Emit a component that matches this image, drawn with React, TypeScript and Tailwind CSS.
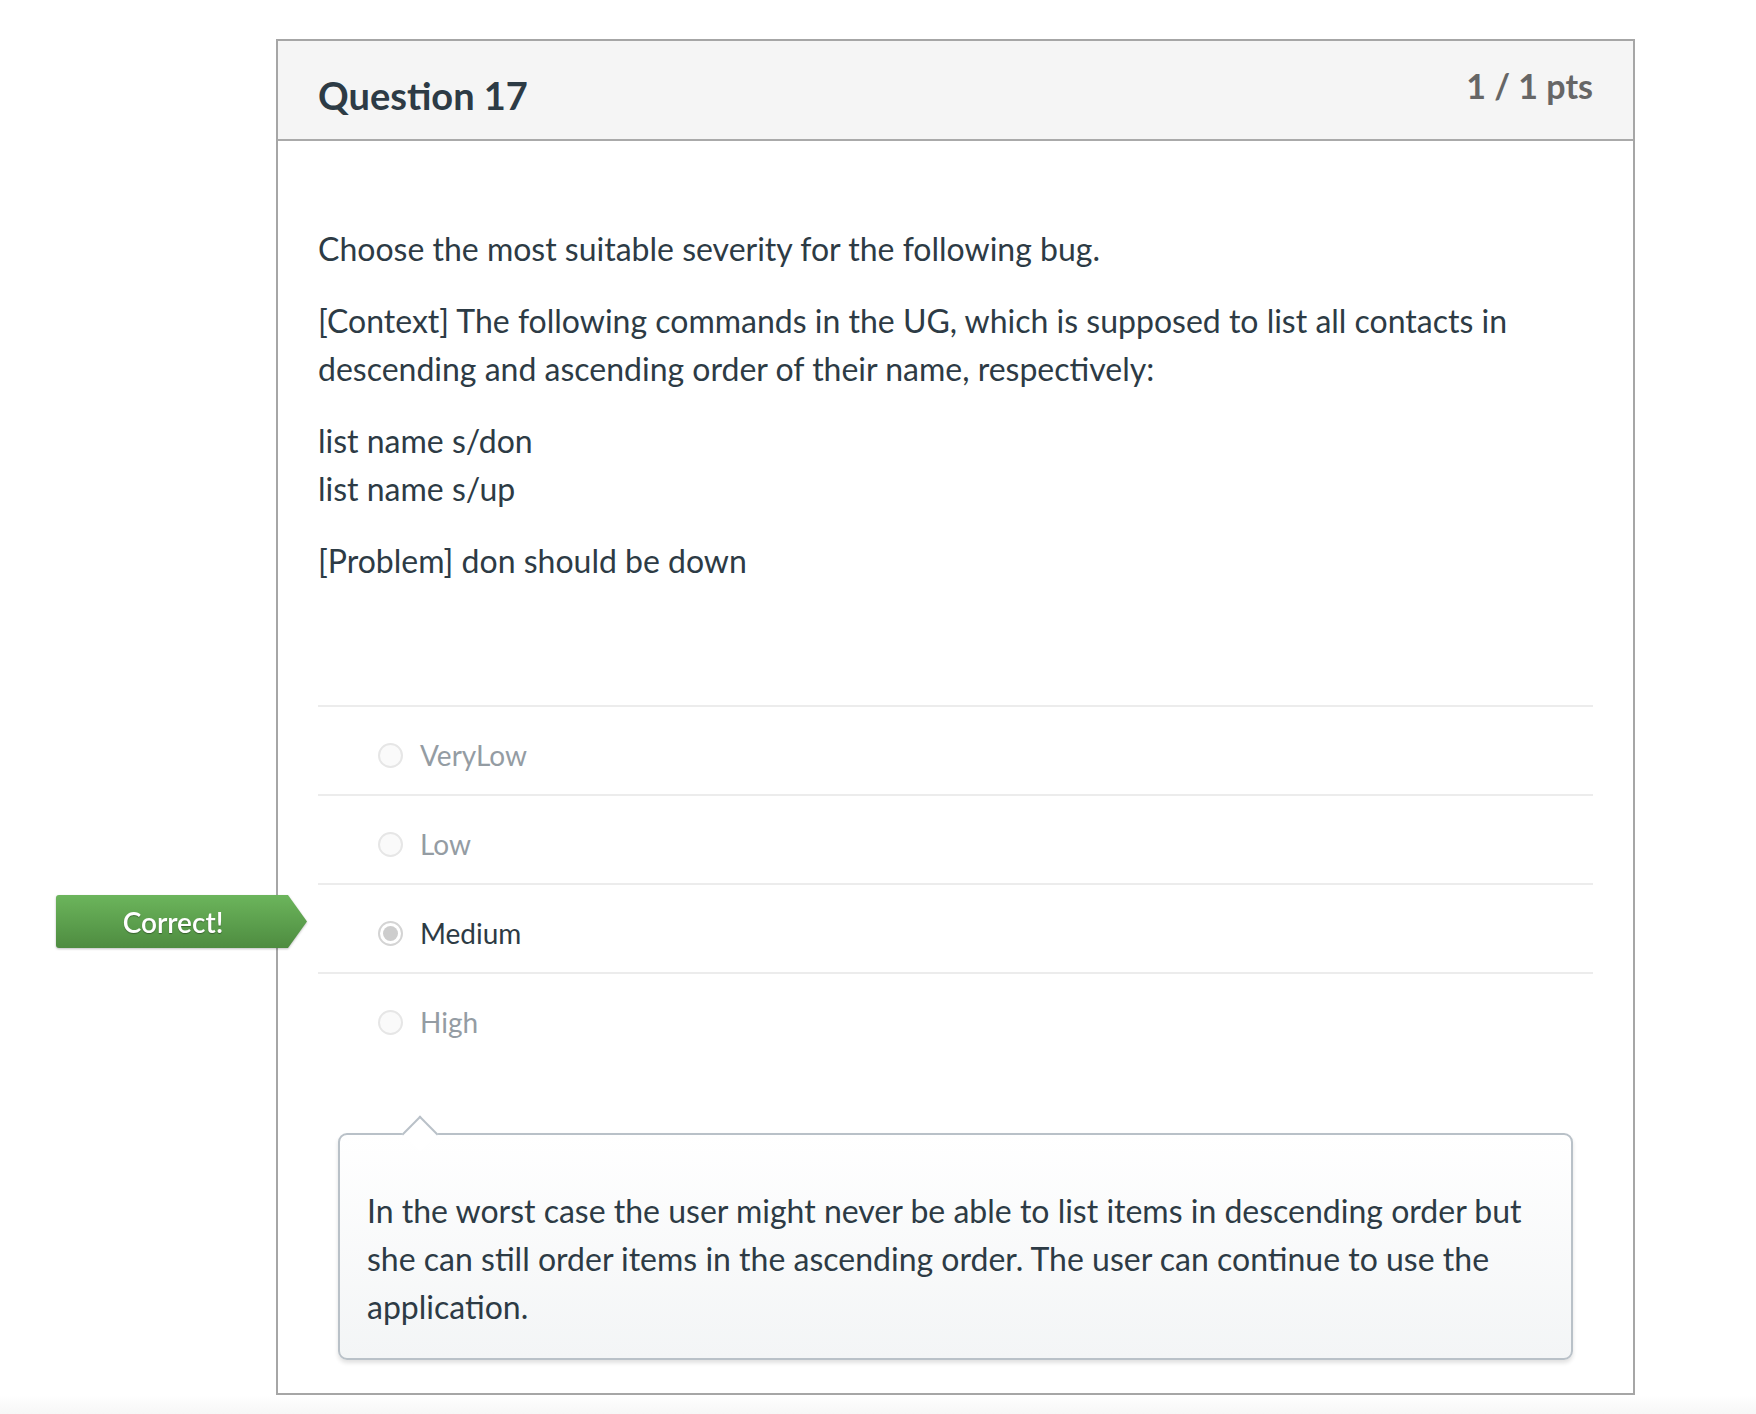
import React from 'react';

type Answer = {
    label: string;
    selected?: boolean;
    correct?: boolean;
};

const answers: Answer[] = [
    { label: 'VeryLow' },
    { label: 'Low' },
    { label: 'Medium', selected: true, correct: true },
    { label: 'High' },
];

const Radio: React.FC<{ selected?: boolean }> = ({ selected }) =>
    selected ? (
        <span className="w-[25px] h-[25px] rounded-full border-2 border-[#d4d4d4] bg-white flex items-center justify-center shrink-0">
            <span className="w-[15px] h-[15px] rounded-full bg-[#cdcdcd]" />
        </span>
    ) : (
        <span className="w-[25px] h-[25px] rounded-full border-2 border-[#e6e6e6] bg-[#fafafa] shrink-0" />
    );

const CorrectBadge: React.FC = () => (
    <div className="absolute left-[-262px] top-[10px] w-[251px] h-[53px] drop-shadow-[0_1px_1px_rgba(0,0,0,0.25)]">
        <div className="w-full h-full rounded-l-[3px] bg-gradient-to-b from-[#6cb55c] to-[#4e8c40] [clip-path:polygon(0_0,232px_0,100%_50%,232px_100%,0_100%)] flex items-center">
            <span className="w-[234px] text-center text-white text-[28px] font-semibold [text-shadow:0_1px_1px_rgba(0,0,0,0.35)]">
                Correct!
            </span>
        </div>
    </div>
);

export default function App() {
    return (
        <div className="min-h-[1414px] bg-white flex flex-col font-['Lato','Liberation_Sans',sans-serif] text-[#2d3b45]">
            <div className="pt-[39px] pl-[276px]">
                <div className="w-[1359px] border-2 border-[#a6a6a6] bg-white">
                    {/* header */}
                    <div className="h-[100px] bg-[#f5f5f5] border-b-2 border-[#aaaaaa] px-[40px] flex justify-between">
                        <h2 className="pt-[28px] text-[38px] font-bold leading-[52px]">Question 17</h2>
                        <span className="pt-[22px] text-[34px] font-bold text-[#666666] leading-[46px]">1 / 1 pts</span>
                    </div>

                    <div className="px-[40px] pt-[84px] pb-[33px]">
                        <div className="flex flex-col gap-[24px] text-[32px] leading-[48px]">
                            <p>Choose the most suitable severity for the following bug.</p>
                            <p>
                                [Context] The following commands in the UG, which is supposed to list all contacts in
                                descending and ascending order of their name, respectively:
                            </p>
                            <p>
                                list name s/don
                                <br />
                                list name s/up
                            </p>
                            <p>[Problem] don should be down</p>
                        </div>

                        <div className="mt-[120px]">
                            {answers.map((a) => (
                                <div key={a.label} className="relative h-[89px] pt-[28px] border-t-2 border-[#ececec]">
                                    {a.correct && <CorrectBadge />}
                                    <div className="flex items-center gap-[17px] pl-[60px]">
                                        <Radio selected={a.selected} />
                                        <span
                                            className={`text-[28px] leading-[40px] ${a.selected ? 'text-[#2d3b45]' : 'text-[#949ca3]'}`}
                                        >
                                            {a.label}
                                        </span>
                                    </div>
                                </div>
                            ))}
                        </div>

                        {/* comment */}
                        <div className="relative mt-[72px] mx-[20px] rounded-[9px] border-2 border-[#b9c1c8] bg-gradient-to-b from-white to-[#f3f5f6] shadow-[0_3px_4px_rgba(0,0,0,0.12)] pl-[27px] pr-[29px] pt-[52px] pb-[27px]">
                            <span className="absolute left-[67px] top-[-14px] w-[26px] h-[26px] rotate-45 border-l-2 border-t-2 border-[#b9c1c8] bg-white" />
                            <p className="text-[32px] leading-[48px]">
                                In the worst case the user might never be able to list items in descending order but
                                she can still order items in the ascending order. The user can continue to use the
                                application.
                            </p>
                        </div>
                    </div>
                </div>
            </div>
            <div className="flex-1 min-h-[20px] bg-gradient-to-b from-white to-[#f6f6f6]" />
        </div>
    );
}
